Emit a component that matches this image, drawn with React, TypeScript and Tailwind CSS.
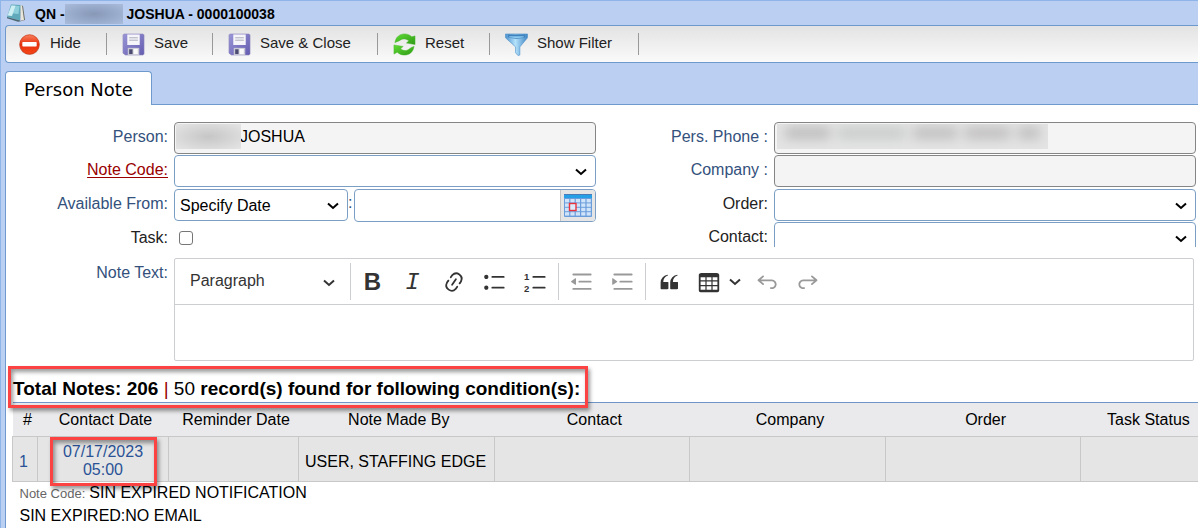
import React from "react";

type IconProps = { className?: string };

const NotebookIcon: React.FC<IconProps> = ({ className }) => (
  <svg viewBox="0 0 20 20" className={className} aria-hidden="true">
    <path d="M14 2l3 1 2 14-4 1z" fill="#6b6a60" />
    <path d="M14 2l2 .5L18 17l-3 .5z" fill="#e8e6dc" />
    <path d="M5 1.500l9.500.5L14 17.500 1 14z" fill="#5fa9bb" />
    <path d="M5.500 2.500l8 .5-1 8L3 10z" fill="#8fcfdb" />
    <path d="M5.500 2.500l4 .3L6 13l-4.500-.5z" fill="#cdeef2" />
    <path d="M1 14l13 3.500 1 .8-3 .4L1 15.300z" fill="#4c6570" />
  </svg>
);

const HideIcon: React.FC<IconProps> = ({ className }) => (
  <svg viewBox="0 0 24 24" className={className} aria-hidden="true">
    <defs>
      <linearGradient id="hide" x1="0" y1="0" x2="0" y2="1">
        <stop offset="0" stopColor="#f9805c" />
        <stop offset=".5" stopColor="#e8310c" />
        <stop offset="1" stopColor="#f4471a" />
      </linearGradient>
    </defs>
    <ellipse cx="12" cy="13" rx="10.500" ry="10" fill="#c9c9c9" />
    <circle cx="12" cy="12" r="10.200" fill="url(#hide)" stroke="#cf3a18" strokeWidth=".8" />
    <rect x="4.500" y="9.500" width="15" height="4.600" rx=".8" fill="#fff" />
  </svg>
);

const SaveIcon: React.FC<IconProps> = ({ className }) => (
  <svg viewBox="0 0 24 24" className={className} aria-hidden="true">
    <defs>
      <linearGradient id="disk" x1="0" y1="0" x2="1" y2="1">
        <stop offset="0" stopColor="#9a96d6" />
        <stop offset="1" stopColor="#645cb0" />
      </linearGradient>
    </defs>
    <path d="M2 1h20l1 1v20l-1 1H3.500L1 21V2z" fill="url(#disk)" stroke="#8d89bd" strokeWidth=".6" />
    <rect x="5.500" y="1.500" width="13" height="11" fill="#f5f5fa" />
    <path d="M7.500 5h9M7.500 7.500h9" stroke="#a9a9b9" />
    <rect x="6" y="15.500" width="12" height="7.500" fill="#c9c9d6" />
    <rect x="7.500" y="17" width="3.500" height="5" fill="#4b4a70" />
    <rect x="12" y="16.500" width="4.500" height="5.500" fill="#fafafa" />
  </svg>
);

const ResetIcon: React.FC<IconProps> = ({ className }) => (
  <svg viewBox="0 0 24 24" className={className} aria-hidden="true">
    <defs>
      <linearGradient id="reset" x1="0" y1="0" x2="1" y2="1">
        <stop offset="0" stopColor="#5fdc35" />
        <stop offset="1" stopColor="#2f9a16" />
      </linearGradient>
    </defs>
    <g fill="url(#reset)" stroke="#46b52a" strokeWidth=".5">
      <path d="M2 10C3 4 7 1 12 1c3 0 5.500 1 7.500 3L23 3v9l-9-1.500 2.500-2.300C14 6 10 5.500 7.500 7.500 6 8.500 4 9 2 10z" />
      <path d="M22 14c-1 6-5 9-10 9-3 0-5.500-1-7.500-3L1 22v-9.500l9.500 1.500L8 16.500c2 2 6 2.500 8.500.5 1.500-1.500 3.500-2.500 5.500-3z" />
    </g>
  </svg>
);

const FilterIcon: React.FC<IconProps> = ({ className }) => (
  <svg viewBox="0 0 24 24" className={className} aria-hidden="true">
    <defs>
      <linearGradient id="filter" x1="0" y1="0" x2="1" y2="0">
        <stop offset="0" stopColor="#4d93cf" />
        <stop offset=".45" stopColor="#b5e2fb" />
        <stop offset="1" stopColor="#3f86c4" />
      </linearGradient>
    </defs>
    <path
      d="M.5 1h23v4L15.500 14.500v8.500l-2 .5-2.500-3v-6L.5 5z"
      fill="url(#filter)"
      stroke="#4a8dc8"
      strokeWidth=".6"
    />
    <path d="M3 1.500h18v3c-5 2-13 2-18 0z" fill="#3f82bd" />
    <path d="M4.500 3.500h15v1c-4 1-11 1-15 0z" fill="#8ccaf0" />
  </svg>
);

const CalendarIcon: React.FC<IconProps> = ({ className }) => (
  <svg viewBox="0 0 28 24" className={className} aria-hidden="true">
    <rect x="0" y="0" width="28" height="23" rx="1" fill="#6a9ddb" />
    <rect x="0" y="0" width="28" height="1" fill="#4a7ab8" />
    <rect x="0" y="1" width="28" height="3" fill="#25a0e6" />
    <g fill="#cfe3f9">
      {[0, 1, 2, 3].map((r) =>
        [0, 1, 2, 3, 4].map((c) => (
          <rect key={`${r}-${c}`} x={1 + c * 5.4} y={5 + r * 4.4} width="4.200" height="3.400" />
        ))
      )}
    </g>
    <rect x="5.500" y="9.500" width="6.500" height="7" fill="#dcebfb" stroke="#e8323c" strokeWidth="1.400" />
  </svg>
);

const Chevron: React.FC<IconProps> = ({ className }) => (
  <svg viewBox="0 0 12 8" className={className} aria-hidden="true">
    <path d="M1 1.500l5 4.500 5-4.500" fill="none" stroke="currentColor" strokeWidth="2" />
  </svg>
);

const EditorIcon: React.FC<{ d: string; children?: React.ReactNode }> = ({ d, children }) => (
  <svg viewBox="0 0 20 20" className="size-6 shrink-0" fill="currentColor" aria-hidden="true">
    <path d={d} />
    {children}
  </svg>
);

const paths = {
  link: "m11.077 15 .991-1.416a.75.75 0 1 1 1.229.86l-1.148 1.64a.748.748 0 0 1-.217.206 5.251 5.251 0 0 1-8.503-5.955.741.741 0 0 1 .12-.274l1.147-1.639a.75.75 0 1 1 1.228.86L4.933 10.7l.006.003a3.75 3.75 0 0 0 6.132 4.294l.006.004zm5.494-5.335a.748.748 0 0 1-.12.274l-1.147 1.639a.75.75 0 1 1-1.228-.86l.86-1.23a3.75 3.75 0 0 0-6.144-4.301l-.86 1.229a.75.75 0 0 1-1.229-.86l1.148-1.64a.748.748 0 0 1 .217-.206 5.251 5.251 0 0 1 8.503 5.955zm-4.563-2.532a.75.75 0 0 1 .184 1.045l-3.155 4.505a.75.75 0 1 1-1.229-.86l3.155-4.506a.75.75 0 0 1 1.045-.184z",
  bullets:
    "M7 5.75c0 .414.336.75.75.75h9.5a.75.75 0 1 0 0-1.5h-9.5a.75.75 0 0 0-.75.75zm-6 0C1 4.784 1.777 4 2.75 4c.966 0 1.75.777 1.75 1.75 0 .966-.777 1.75-1.75 1.75C1.784 7.5 1 6.723 1 5.75zm6 9c0 .414.336.75.75.75h9.5a.75.75 0 1 0 0-1.5h-9.5a.75.75 0 0 0-.75.75zm-6 0c0-.966.777-1.75 1.75-1.75.966 0 1.75.777 1.75 1.75 0 .966-.777 1.75-1.75 1.75-.966 0-1.75-.777-1.75-1.75z",
  numbers:
    "M7 5.75c0 .414.336.75.75.75h9.5a.75.75 0 1 0 0-1.5h-9.5a.75.75 0 0 0-.75.75zm0 9c0 .414.336.75.75.75h9.5a.75.75 0 1 0 0-1.5h-9.5a.75.75 0 0 0-.75.75z",
  outdent:
    "M2 3.75c0 .414.336.75.75.75h14.5a.75.75 0 1 0 0-1.5H2.75a.75.75 0 0 0-.75.75zm5 6c0 .414.336.75.75.75h9.5a.75.75 0 1 0 0-1.5h-9.5a.75.75 0 0 0-.75.75zM2.75 16.5h14.5a.75.75 0 1 0 0-1.5H2.75a.75.75 0 1 0 0 1.5zm1.618-9.55L.98 9.358a.4.4 0 0 0 .013.661l3.39 2.207A.4.4 0 0 0 5 11.892V7.275a.4.4 0 0 0-.632-.326z",
  indent:
    "M2 3.75c0 .414.336.75.75.75h14.5a.75.75 0 1 0 0-1.5H2.75a.75.75 0 0 0-.75.75zm5 6c0 .414.336.75.75.75h9.5a.75.75 0 1 0 0-1.5h-9.5a.75.75 0 0 0-.75.75zM2.75 16.5h14.5a.75.75 0 1 0 0-1.5H2.75a.75.75 0 1 0 0 1.5zM1.632 6.95 5.02 9.358a.4.4 0 0 1-.013.661l-3.39 2.207A.4.4 0 0 1 1 11.892V7.275a.4.4 0 0 1 .632-.326z",
  quote:
    "M3 10.423a6.5 6.5 0 0 1 6.056-6.408l.038.67C6.448 5.423 5.354 7.663 5.22 10H9c.552 0 .5.432.5.986v4.511c0 .554-.448.503-1 .503h-5c-.552 0-.5-.449-.5-1.003v-4.574zm8 0a6.5 6.5 0 0 1 6.056-6.408l.038.67c-2.646.739-3.74 2.979-3.873 5.315H17c.552 0 .5.432.5.986v4.511c0 .554-.448.503-1 .503h-5c-.552 0-.5-.449-.5-1.003v-4.574z",
  table:
    "M3 6v2.500h4V6H3zm0 3.500v3h4v-3H3zm0 4v3h4v-3H3zm5 3h4v-3H8v3zm5 0h4v-3h-4v3zm4-4v-3h-4v3h4zm0-4V6h-4v2.500h4zm1.5 8.500a1.5 1.5 0 0 1-1.5 1.500H3A1.5 1.5 0 0 1 1.5 17V4c.222-.863 1.068-1.5 2-1.5h13c.932 0 1.778.637 2 1.5v13zM12 12.5v-3H8v3h4zm0-4V6H8v2.500h4z",
  undo: "m5.042 9.367 2.189 1.837a.75.75 0 0 1-.965 1.149l-3.788-3.18a.747.747 0 0 1-.21-.284.75.75 0 0 1 .17-.945L6.23 4.762a.75.75 0 1 1 .964 1.15L4.863 7.866h8.917A.75.75 0 0 1 14 7.9a4 4 0 1 1-1.477 7.718l.344-1.489a2.5 2.5 0 1 0 1.094-4.73l.008-.032H5.042z",
  redo: "m14.958 9.367-2.189 1.837a.75.75 0 0 0 .965 1.149l3.788-3.18a.747.747 0 0 0 .21-.284.75.75 0 0 0-.17-.945L13.77 4.762a.75.75 0 1 0-.964 1.15l2.331 1.955H6.22A.75.75 0 0 0 6 7.9a4 4 0 1 0 1.477 7.718l-.344-1.489A2.5 2.5 0 1 1 6.039 9.4l-.008-.032h8.927z",
};

const actions = [
  { label: "Hide", Icon: HideIcon, width: "w-[101px]", pad: "pl-[12px]" },
  { label: "Save", Icon: SaveIcon, width: "w-[106px]", pad: "pl-[15px]" },
  { label: "Save & Close", Icon: SaveIcon, width: "w-[165px]", pad: "pl-[15px]" },
  { label: "Reset", Icon: ResetIcon, width: "w-[112px]", pad: "pl-[15px]" },
  { label: "Show Filter", Icon: FilterIcon, width: "w-[149px]", pad: "pl-[15px]" },
];

const columns = [
  { name: "#", width: "w-[25px]", pad: "pl-[5px]" },
  { name: "Contact Date", width: "w-[131px]", pad: "pl-[5px]" },
  { name: "Reminder Date", width: "w-[130px]", pad: "pl-[5px]" },
  { name: "Note Made By", width: "w-[16.5%]", pad: "pl-[5px]" },
  { name: "Contact", width: "w-[16.5%]", pad: "pl-[5px]" },
  { name: "Company", width: "w-[16.5%]", pad: "pl-[5px]" },
  { name: "Order", width: "w-[16.5%]", pad: "pl-[5px]" },
  { name: "Task Status", width: "", pad: "pl-[18px]" },
];

const Label: React.FC<{ htmlFor: string; className?: string; children: React.ReactNode }> = ({
  htmlFor,
  className = "text-[#33517c]",
  children,
}) => (
  <div className="w-[162px] shrink-0 pt-[6px] text-right leading-[18px]">
    <label htmlFor={htmlFor} className={className}>
      {children}
    </label>
  </div>
);

const Select: React.FC<{ id: string; className: string; option?: string }> = ({
  id,
  className,
  option = "",
}) => (
  <div className={`relative h-8 ${className}`}>
    <select
      id={id}
      className="h-8 w-full appearance-none rounded-[4px] border border-[#7b9fc4] bg-white pl-[5px] pt-[2px] text-black"
    >
      <option>{option}</option>
    </select>
    <Chevron className="pointer-events-none absolute right-[9px] top-[13px] h-2 w-3 text-black" />
  </div>
);

const ToolButton: React.FC<{ name: string; muted?: boolean; children: React.ReactNode }> = ({
  name,
  muted,
  children,
}) => (
  <button
    type="button"
    aria-label={name}
    className={`flex h-full w-[41px] items-center justify-center ${
      muted ? "text-[#999999]" : "text-[#333333]"
    }`}
  >
    {children}
  </button>
);

const readOnlyField = "h-8 w-full rounded-[4px] border border-[#858585] bg-[#f4f4f4] text-black";

const App: React.FC = () => {
  return (
    <div className="min-h-screen overflow-hidden border-l border-t border-[#8fb4e8] bg-[#bacff1] pl-1 font-['Liberation_Sans',Arial,sans-serif] text-base text-black">
      <header className="flex h-6 items-center text-sm font-bold leading-6">
        <NotebookIcon className="ml-px size-5" />
        <h1 className="ml-[9px] flex items-center pt-0.5">
          QN -
          <span className="mr-1 h-5 w-[58px] bg-radial from-[#8798b7] to-[#a9bcdc]" />
          JOSHUA - 0000100038
        </h1>
      </header>

      <div className="flex h-[38px] items-center rounded-l-[4px] border border-r-0 border-[#6d99cc] bg-linear-to-b from-[#e3e3e3] to-[#fafafa] text-[15px] text-[#222222]">
        {actions.map(({ label, Icon, width, pad }) => (
          <div key={label} className={`flex items-center justify-between ${width}`}>
            <button type="button" className={`flex items-center gap-[9px] ${pad}`}>
              <Icon className="mt-px size-[23px]" />
              <span className="pb-0.5">{label}</span>
            </button>
            <span className="h-[22px] w-px bg-[#999999]" />
          </div>
        ))}
      </div>

      <div role="tablist" className="mt-2 flex">
        <button
          type="button"
          role="tab"
          aria-selected="true"
          className="relative z-10 -mb-px h-[34px] w-[147px] rounded-t-[4px] border border-b-0 border-[#6d99cc] bg-white pt-[2px] font-['DejaVu_Sans',Verdana,sans-serif] text-[18px]"
        >
          Person Note
        </button>
      </div>

      <main className="min-h-[424px] border-l border-t border-[#6d99cc] bg-white pt-[17px]">
        <form>
          <div className="grid grid-cols-2 gap-[10px] pr-[2px]">
            <div className="flex flex-col gap-px">
              <div className="flex gap-[6px]">
                <Label htmlFor="person">Person:</Label>
                <div className="relative flex-1">
                  <input id="person" readOnly value="JOSHUA" className={`${readOnlyField} pb-[2px] pl-[65px]`} />
                  <span className="absolute left-[2px] top-[2px] h-[25px] w-[65px] bg-radial from-[#c6c6c6] to-[#e5e5e5]" />
                </div>
              </div>
              <div className="flex gap-[6px]">
                <Label htmlFor="code" className="text-[#990000] underline underline-offset-2">
                  Note Code:
                </Label>
                <Select id="code" className="flex-1" />
              </div>
              <div className="mt-px flex gap-[6px]">
                <Label htmlFor="available">Available From:</Label>
                <div className="flex flex-1 text-[#33517c]">
                  <Select id="available" className="w-[174px]" option="Specify Date" />
                  <span className="w-[6px] pt-[5px] leading-[18px]">:</span>
                  <div className="flex h-[33px] flex-1 overflow-hidden rounded-[4px] border border-[#7b9fc4]">
                    <input aria-label="Date" className="w-0 flex-1 px-1" />
                    <button
                      type="button"
                      aria-label="Pick a date"
                      className="flex w-[35px] items-center justify-center border-l border-[#c4c4c4] bg-[#e5e5e5]"
                    >
                      <CalendarIcon className="h-6 w-7" />
                    </button>
                  </div>
                </div>
              </div>
              <div className="flex gap-[6px]">
                <Label htmlFor="task" className="text-[#222222]">
                  Task:
                </Label>
                <input
                  id="task"
                  type="checkbox"
                  className="ml-[5px] mt-[8px] size-[14px] appearance-none rounded-[3px] border border-[#767676] bg-white"
                />
              </div>
            </div>

            <div className="flex flex-col gap-px">
              <div className="flex gap-[6px]">
                <Label htmlFor="phone">Pers. Phone :</Label>
                <div className="relative flex-1">
                  <input id="phone" readOnly className={readOnlyField} />
                  <span className="absolute left-[3px] top-[2px] h-[25px] w-[271px] overflow-hidden bg-[#e4e4e4]">
                    <span className="flex h-[18px] items-center gap-2 px-2 blur-[6px]">
                      <span className="h-3 flex-2 bg-[#bcbcbc]" />
                      <span className="h-3 flex-3 bg-[#c8cccb]" />
                      <span className="h-3 flex-2 bg-[#bfbfbf]" />
                      <span className="h-3 flex-2 bg-[#c0bebf]" />
                      <span className="h-3 flex-1 bg-[#bebebe]" />
                    </span>
                  </span>
                </div>
              </div>
              <div className="flex gap-[6px]">
                <Label htmlFor="company">Company :</Label>
                <div className="flex-1">
                  <input id="company" readOnly className={readOnlyField} />
                </div>
              </div>
              <div className="mt-px flex gap-[6px]">
                <Label htmlFor="order" className="text-[#222222]">
                  Order:
                </Label>
                <Select id="order" className="flex-1" />
              </div>
              <div className="flex h-[25px] gap-[6px] overflow-hidden">
                <Label htmlFor="contact" className="text-[#222222]">
                  Contact:
                </Label>
                <Select id="contact" className="flex-1" />
              </div>
            </div>
          </div>

          <div className="mt-[11px] flex gap-[6px] pr-1">
            <Label htmlFor="note">Note Text:</Label>
            <div className="flex-1 rounded-[2px] border border-[#ccced1]">
              <div className="flex h-[46px] items-center border-b border-[#ccced1]">
                <button
                  type="button"
                  className="flex h-full w-[175px] items-center justify-between px-[15px] pb-0.5 text-[#333333]"
                >
                  Paragraph
                  <Chevron className="mt-1 h-2 w-3" />
                </button>
                <span className="h-[37px] w-px bg-[#ccced1]" />
                <ToolButton name="Bold">
                  <span className="pl-0.5 text-2xl font-bold">B</span>
                </ToolButton>
                <ToolButton name="Italic">
                  <span className="pt-0.5 font-['Liberation_Mono',monospace] text-2xl italic">I</span>
                </ToolButton>
                <ToolButton name="Link">
                  <EditorIcon d={paths.link} />
                </ToolButton>
                <ToolButton name="Bulleted list">
                  <EditorIcon d={paths.bullets} />
                </ToolButton>
                <ToolButton name="Numbered list">
                  <EditorIcon d={paths.numbers}>
                    <text x="0" y="8" fontSize="8" fontWeight="700">
                      1
                    </text>
                    <text x="0" y="18" fontSize="8" fontWeight="700">
                      2
                    </text>
                  </EditorIcon>
                </ToolButton>
                <span className="mx-[2px] h-[37px] w-px bg-[#ccced1]" />
                <ToolButton name="Decrease indent" muted>
                  <EditorIcon d={paths.outdent} />
                </ToolButton>
                <ToolButton name="Increase indent" muted>
                  <EditorIcon d={paths.indent} />
                </ToolButton>
                <span className="mx-[2px] h-[37px] w-px bg-[#ccced1]" />
                <ToolButton name="Block quote">
                  <EditorIcon d={paths.quote} />
                </ToolButton>
                <button
                  type="button"
                  aria-label="Insert table"
                  className="flex h-full w-[57px] items-center gap-[8px] pl-[8px] text-[#333333]"
                >
                  <EditorIcon d={paths.table} />
                  <Chevron className="h-2 w-3" />
                </button>
                <ToolButton name="Undo" muted>
                  <EditorIcon d={paths.undo} />
                </ToolButton>
                <ToolButton name="Redo" muted>
                  <EditorIcon d={paths.redo} />
                </ToolButton>
              </div>
              <textarea id="note" className="block h-[55px] w-full resize-none px-3 py-2" />
            </div>
          </div>
        </form>

        <section className="ml-[6px] mt-[17px]">
          <h2 className="relative inline-block pl-px align-top text-[19px] font-bold leading-[22px]">
            Total Notes: 206 <span className="font-normal text-[#990000]">|</span>{" "}
            <span className="font-normal">50</span> record(s) found for following condition(s):
            <span className="pointer-events-none absolute -bottom-2 -left-1 -right-2 -top-3 border-3 border-[#fb4343] shadow-[2px_3px_4px_#0006,inset_2px_3px_4px_#0006]" />
          </h2>
          <table className="w-full table-fixed border-collapse">
            <thead>
              <tr className="h-[34px] border-b border-t border-b-[#c8c8c8] border-t-[#7096c8] bg-[#eaeaec]">
                {columns.map((column) => (
                  <th key={column.name} className={`p-0 font-normal ${column.width} ${column.pad}`}>
                    {column.name}
                  </th>
                ))}
              </tr>
            </thead>
            <tbody>
              <tr className="h-[45px] border-b border-[#c8c8c8] bg-[#e5e5e5] *:border-l *:border-[#c8c8c8] *:p-0">
                <td className="text-[#2a5296]">
                  <a href="#note-1" className="block pl-[6px] pt-[5px]">
                    1
                  </a>
                </td>
                <td className="text-center leading-[18px] text-[#2a5296]">
                  <a href="#note-1" className="relative mx-auto block w-[98px] pt-1">
                    07/17/2023
                    <br />
                    05:00
                    <span className="pointer-events-none absolute -bottom-[7px] -left-1 -right-[5px] -top-[2px] border-3 border-[#fb4343] shadow-[2px_3px_4px_#0006,inset_2px_3px_4px_#0006]" />
                  </a>
                </td>
                <td />
                <td className="whitespace-nowrap">
                  <span className="block pl-[6px] pt-[5px]">USER, STAFFING EDGE</span>
                </td>
                <td />
                <td />
                <td />
                <td />
              </tr>
              <tr id="note-1" className="border-b border-[#eeeeee]">
                <td colSpan={8} className="h-[47px] p-0 pb-px pl-[7px] leading-[22px]">
                  <p className="flex items-baseline gap-1">
                    <span className="text-[13px] text-[#666666]">Note Code:</span> SIN EXPIRED NOTIFICATION
                  </p>
                  <p>SIN EXPIRED:NO EMAIL</p>
                </td>
              </tr>
            </tbody>
          </table>
        </section>
      </main>
    </div>
  );
};

export default App;
